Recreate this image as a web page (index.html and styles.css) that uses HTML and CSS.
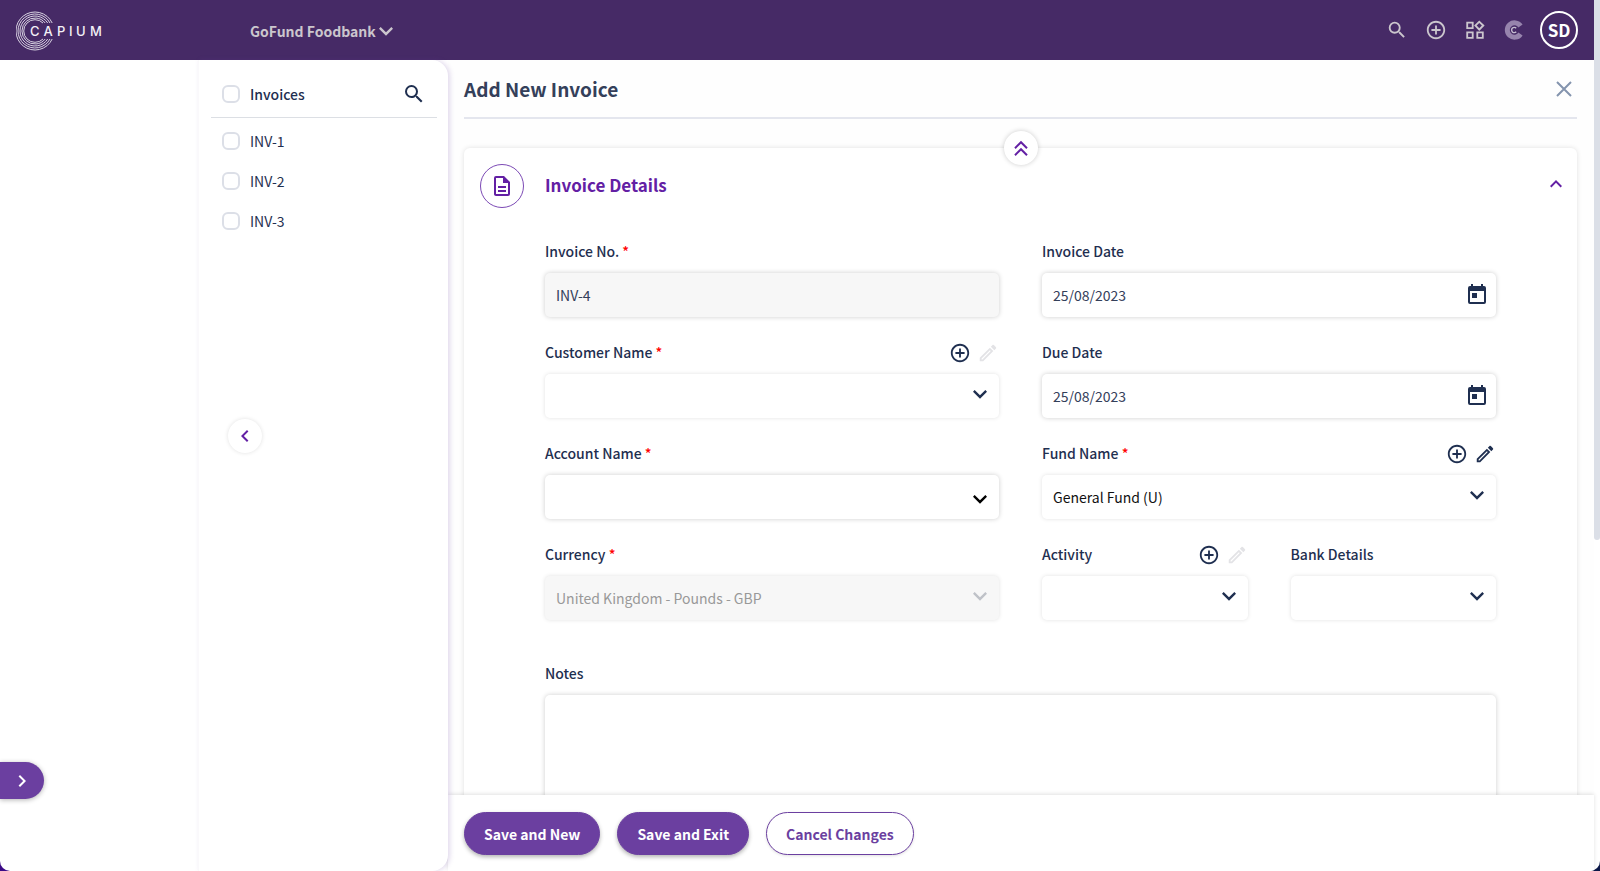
FILE: index.html
```html
<!DOCTYPE html>
<html lang="en">
<head>
<meta charset="utf-8">
<title>Add New Invoice</title>
<link rel="stylesheet" href="styles.css">
</head>
<body>
<svg class="sprite" aria-hidden="true">
  <symbol id="search" viewBox="0 0 24 24"><path fill="currentColor" d="M15.5 14h-.79l-.28-.27A6.47 6.47 0 0 0 16 9.5 6.5 6.5 0 1 0 9.5 16c1.61 0 3.09-.59 4.23-1.57l.27.28v.79l5 4.99L20.49 19zm-6 0C7.01 14 5 11.99 5 9.5S7.01 5 9.5 5 14 7.01 14 9.5 11.99 14 9.5 14z"/></symbol>
  <symbol id="plus" viewBox="0 0 24 24"><path fill="currentColor" d="M13 7h-2v4H7v2h4v4h2v-4h4v-2h-4zm-1-5C6.48 2 2 6.48 2 12s4.48 10 10 10 10-4.48 10-10S17.52 2 12 2zm0 18c-4.41 0-8-3.59-8-8s3.59-8 8-8 8 3.590 8 8-3.590 8-8 8z"/></symbol>
  <symbol id="pencil" viewBox="0 0 24 24"><path fill="currentColor" d="M14.060 9.020l.92.920L5.920 19H5v-.920zM17.660 3c-.25 0-.510.100-.700.290l-1.830 1.830 3.750 3.750 1.830-1.830c.390-.390.390-1.020 0-1.410l-2.340-2.340A1 1 0 0 0 17.660 3zm-3.600 3.190L3 17.250V21h3.750L17.810 9.940z"/></symbol>
  <symbol id="down" viewBox="0 0 24 24"><path fill="currentColor" d="M7.410 8.590 12 13.170l4.590-4.580L18 10l-6 6-6-6z"/></symbol>
  <symbol id="up" viewBox="0 0 24 24"><path fill="currentColor" d="M12 8l-6 6 1.410 1.410L12 10.830l4.590 4.580L18 14z"/></symbol>
  <symbol id="left" viewBox="0 0 24 24"><path fill="currentColor" d="M15.410 7.410 14 6l-6 6 6 6 1.410-1.410L10.830 12z"/></symbol>
  <symbol id="right" viewBox="0 0 24 24"><path fill="currentColor" d="M10 6 8.590 7.410 13.170 12l-4.580 4.590L10 18l6-6z"/></symbol>
  <symbol id="calendar" viewBox="0 0 24 24"><path fill="currentColor" d="M19 3h-1V1h-2v2H8V1H6v2H5a2 2 0 0 0-2 2v14a2 2 0 0 0 2 2h14a2 2 0 0 0 2-2V5a2 2 0 0 0-2-2zm0 16H5V8h14zM7 10h5v5H7z"/></symbol>
</svg>
<div class="app">
  <div class="page">
    <header class="topbar">
      <a class="logo" href="#" aria-label="Capium">
        <svg class="logo-art" viewBox="0 0 90 40" fill="none" stroke="#d9d3e2">
          <g stroke-width="1">
            <path d="M36.200 12A19 19 0 1 0 36.200 28"/>
            <path d="M34 12A17 17 0 1 0 34 28"/>
            <path d="M31.700 12A15 15 0 1 0 31.700 28"/>
            <path d="M29.200 12A13 13 0 1 0 29.200 28"/>
            <path d="M27 12A11.300 11.300 0 1 0 27 28"/>
          </g>
          <text class="logo-text" x="14 27.500 41 53 60 74" y="25">CAPIUM</text>
        </svg>
      </a>
      <button class="company" type="button">GoFund Foodbank <svg class="icon"><use href="#down"/></svg></button>
      <nav class="tools" aria-label="Tools">
        <button type="button" aria-label="Search"><svg class="icon"><use href="#search"/></svg></button>
        <button type="button" aria-label="Add"><svg class="icon"><use href="#plus"/></svg></button>
        <button type="button" aria-label="Apps"><svg class="icon" viewBox="0 0 24 24"><path fill="currentColor" fill-rule="evenodd" d="M16.660 1.500l5.840 5.660-5.840 5.840L11 7.160zm0 2.830-2.830 2.830 2.830 2.840 2.840-2.840zM2.500 3h8v8h-8zm2 2v4h4V5zM2.500 13.500h8v8h-8zm2 2v4h4v-4zM13.500 13.500h8v8h-8zm2 2v4h4v-4z"/></svg></button>
        <button type="button" aria-label="Capium apps"><svg class="icon" viewBox="0 0 22 22"><path fill="none" stroke="#9784ad" stroke-width="5" d="M17.500 7A7.200 7.200 0 1 0 17.500 15"/><path fill="none" stroke="#c5bdd0" stroke-width="1.400" d="M13.200 9.300A2.600 2.600 0 1 0 13.200 12.700"/></svg></button>
        <button class="avatar" type="button">SD</button>
      </nav>
    </header>
    <div class="body">
      <div class="rail"><button class="rail-open" type="button" aria-label="Open menu"><svg class="icon"><use href="#right"/></svg></button></div>
      <aside class="sidebar">
        <div class="list-head">
          <label class="row"><input type="checkbox"> <b>Invoices</b></label>
          <button type="button" aria-label="Search invoices"><svg class="icon"><use href="#search"/></svg></button>
        </div>
        <ul class="list">
          <li><label class="row"><input type="checkbox"> INV-1</label></li>
          <li><label class="row"><input type="checkbox"> INV-2</label></li>
          <li><label class="row"><input type="checkbox"> INV-3</label></li>
        </ul>
        <button class="collapse" type="button" aria-label="Collapse list"><svg class="icon"><use href="#left"/></svg></button>
      </aside>
      <main class="main">
        <div class="content">
          <div class="title">
            <h1>Add New Invoice</h1>
            <button type="button" aria-label="Close"><svg class="close" viewBox="0 0 16 16"><path stroke="#8494ae" stroke-width="2" d="M1 1l14 14M15 1 1 15"/></svg></button>
          </div>
          <section class="card">
            <button class="fold" type="button" aria-label="Fold all"><svg class="icon" viewBox="0 0 24 24"><path fill="none" stroke="currentColor" stroke-width="2" d="M6 12.200 12 6.200l6 6M6 19.200 12 13.200l6 6"/></svg></button>
            <div class="card-head">
              <span class="badge"><svg class="icon" viewBox="0 0 24 24"><path fill="currentColor" d="M8 16h8v2H8zm0-4h8v2H8zm6-10H6a2 2 0 0 0-2 2v16c0 1.100.890 2 1.990 2H18a2 2 0 0 0 2-2V8zm4 18H6V4h7v5h5z"/></svg></span>
              <h2>Invoice Details</h2>
              <button type="button" aria-label="Collapse section"><svg class="icon"><use href="#up"/></svg></button>
            </div>
            <form class="form">
              <div class="field wide">
                <div class="label"><label for="no">Invoice No. <i>*</i></label></div>
                <input class="box" id="no" type="text" value="INV-4" readonly>
              </div>
              <div class="field wide">
                <div class="label"><label for="date">Invoice Date</label></div>
                <div class="control"><input class="box" id="date" type="text" value="25/08/2023"><svg class="icon"><use href="#calendar"/></svg></div>
              </div>
              <div class="field wide">
                <div class="label"><label for="customer">Customer Name <i>*</i></label><button type="button" aria-label="Add customer"><svg class="icon"><use href="#plus"/></svg></button><button type="button" aria-label="Edit customer" disabled><svg class="icon"><use href="#pencil"/></svg></button></div>
                <div class="control"><select class="box light" id="customer"><option></option></select><svg class="icon chevron"><use href="#down"/></svg></div>
              </div>
              <div class="field wide">
                <div class="label"><label for="due">Due Date</label></div>
                <div class="control"><input class="box" id="due" type="text" value="25/08/2023"><svg class="icon"><use href="#calendar"/></svg></div>
              </div>
              <div class="field wide">
                <div class="label"><label for="account">Account Name <i>*</i></label></div>
                <div class="control account"><select class="box" id="account"><option></option></select><svg class="icon chevron"><use href="#down"/></svg></div>
              </div>
              <div class="field wide">
                <div class="label"><label for="fund">Fund Name <i>*</i></label><button type="button" aria-label="Add fund"><svg class="icon"><use href="#plus"/></svg></button><button type="button" aria-label="Edit fund"><svg class="icon"><use href="#pencil"/></svg></button></div>
                <div class="control"><select class="box light" id="fund"><option>General Fund (U)</option></select><svg class="icon chevron"><use href="#down"/></svg></div>
              </div>
              <div class="field wide">
                <div class="label"><label for="currency">Currency <i>*</i></label></div>
                <div class="control"><select class="box light" id="currency" disabled><option>United Kingdom - Pounds - GBP</option></select><svg class="icon chevron"><use href="#down"/></svg></div>
              </div>
              <div class="field">
                <div class="label"><label for="activity">Activity</label><button type="button" aria-label="Add activity"><svg class="icon"><use href="#plus"/></svg></button><button type="button" aria-label="Edit activity" disabled><svg class="icon"><use href="#pencil"/></svg></button></div>
                <div class="control"><select class="box light" id="activity"><option></option></select><svg class="icon chevron"><use href="#down"/></svg></div>
              </div>
              <div class="field">
                <div class="label"><label for="bank">Bank Details</label></div>
                <div class="control"><select class="box light" id="bank"><option></option></select><svg class="icon chevron"><use href="#down"/></svg></div>
              </div>
              <div class="field full">
                <div class="label"><label for="notes">Notes</label></div>
                <textarea class="box" id="notes"></textarea>
              </div>
            </form>
          </section>
        </div>
        <footer class="actions">
          <button class="pill" type="button">Save and New</button>
          <button class="pill" type="button">Save and Exit</button>
          <button class="pill outline" type="button">Cancel Changes</button>
        </footer>
      </main>
    </div>
  </div>
  <div class="track"><div class="thumb"></div></div>
</div>
</body>
</html>
```
FILE: styles.css
```css
* { box-sizing: border-box; }
body {
  margin: 0;
  font: 14px/20px "Noto Sans CJK SC", "Noto Sans", sans-serif;
  color: #1f2f50;
  background: linear-gradient(90deg, #3b0a86 50%, #0a1748 50%);
}
button {
  font: inherit;
  color: inherit;
  background: none;
  border: 0;
  padding: 0;
  display: inline-flex;
  align-items: center;
  justify-content: center;
}
h1, h2 { margin: 0; font-weight: 700; }
.sprite { display: none; }
.icon { width: 24px; height: 24px; display: block; flex: none; }

.app {
  display: flex;
  height: 100vh;
  overflow: hidden;
  background: #fff;
  border-radius: 0 0 10px 10px;
}
.page { flex: 1; min-width: 0; display: flex; flex-direction: column; }
.track { width: 6px; }
.thumb { height: 62%; background: #dbdfe7; border-radius: 0 0 3px 3px; }

.topbar {
  height: 60px;
  flex: none;
  display: flex;
  align-items: center;
  padding: 0 16px;
  background: #462a66;
  color: #cbc6cd;
}
.logo { width: 234px; padding-top: 2px; }
.logo-art { width: 90px; height: 40px; display: block; }
.logo-text { font: 500 13px "Inter", sans-serif; fill: #f3f0f6; stroke: none; }
.company { font-weight: 700; padding-top: 2px; }
.company .icon { width: 28px; height: 28px; margin-left: -4px; }
.tools { margin-left: auto; display: flex; align-items: center; gap: 17px; }
.tools .icon { width: 22px; height: 22px; }
.avatar {
  width: 38px;
  height: 38px;
  margin-left: -2px;
  border: 2px solid #fff;
  border-radius: 50%;
  color: #fff;
  font-size: 17px;
  font-weight: 700;
}

.body { flex: 1; min-height: 0; display: flex; }
.rail { width: 198px; flex: none; display: flex; align-items: flex-end; padding-bottom: 72px; }
.rail-open {
  width: 44px;
  height: 37px;
  border-radius: 0 19px 19px 0;
  background: #6b3fa0;
  color: #fff;
  box-shadow: 0 1px 5px rgba(0, 0, 0, .3);
}
.sidebar {
  width: 250px;
  flex: none;
  position: relative;
  padding: 11px 11px 0 12px;
  border-left: 1px solid #faf9fb;
  border-radius: 0 16px 16px 0;
  background: #fff;
  box-shadow: 2px 0 5px rgba(107, 63, 160, .2);
  z-index: 1;
}
.list-head { display: flex; justify-content: space-between; align-items: center; height: 47px; padding: 0 11px 0 0; border-bottom: 1px solid #dcdfe4; }
.row { display: flex; align-items: center; gap: 10px; padding-left: 11px; }
.row b { font-weight: 500; }
.row input {
  appearance: none;
  width: 18px;
  height: 18px;
  margin: 0;
  border: 2px solid #dcdfe7;
  border-radius: 6px;
  background: #fff;
}
.list { list-style: none; margin: 0; padding: 3px 0 0; }
.list .row { height: 40px; }
.collapse, .fold {
  position: absolute;
  width: 34px;
  height: 34px;
  border-radius: 50%;
  background: #fff;
  color: #6320a4;
  box-shadow: 0 0 5px rgba(0, 0, 0, .2);
}
.collapse { left: 29px; top: 359px; box-shadow: 0 0 4px rgba(0, 0, 0, .12); }

.main { flex: 1; min-width: 0; display: flex; flex-direction: column; background: #fefefe; }
.content { flex: 1; min-height: 0; overflow: hidden; padding: 0 17px 0 16px; }
.title {
  display: flex;
  align-items: center;
  justify-content: space-between;
  height: 59px;
  padding-right: 5px;
  border-bottom: 2px solid #e4e6ee;
}
.title h1 { font-size: 19px; line-height: 28px; color: #34405a; }
.close { width: 16px; height: 16px; }
.card {
  position: relative;
  margin-top: 29px;
  border-radius: 6px;
  background: #fff;
  box-shadow: 0 0 5px rgba(0, 0, 0, .12);
}
.fold { left: calc(50% - 17px); top: -17px; }
.card-head { display: flex; align-items: center; height: 76px; padding: 0 9px 0 16px; color: #6320a4; }
.card-head h2 { flex: 1; font-size: 17px; line-height: 24px; margin-left: 21px; padding-bottom: 2px; }
.card-head button { padding-bottom: 4px; }
.badge {
  width: 44px;
  height: 44px;
  display: flex;
  align-items: center;
  justify-content: center;
  border: 1px solid #7c4ab5;
  border-radius: 50%;
}
.form {
  display: grid;
  grid-template-columns: repeat(4, 1fr);
  gap: 21px 43px;
  padding: 13px 81px 32px;
}
.wide { grid-column: span 2; }
.full { grid-column: 1 / -1; margin-top: 18px; }
.field { min-width: 0; }
.label { display: flex; align-items: center; gap: 6px; height: 28px; margin-bottom: 8px; font-weight: 500; }
.label label { flex: 1; }
.label i { color: #f00; font-style: normal; }
.label button { padding-top: 2px; }
.label .icon { width: 22px; height: 22px; }
.label button:disabled { color: #e3e3e6; }
.control { display: grid; align-items: center; }
.control > * { grid-area: 1 / 1; }
.control .icon { justify-self: end; margin-right: 7px; pointer-events: none; }
.control .chevron { width: 28px; height: 28px; margin: 0 5px 4px 0; }
.control.account .chevron { margin: 4px 5px 0 0; color: #000; }
.box {
  display: block;
  width: 100%;
  height: 44px;
  margin: 0;
  padding: 0 11px;
  border: 0;
  border-radius: 5px;
  font: inherit;
  color: #34405a;
  background: #fff;
  appearance: none;
  resize: none;
  box-shadow: 0 0 5px rgba(0, 0, 0, .2);
}
.box.light { color: #111; box-shadow: 0 0 4px rgba(0, 0, 0, .12); }
.box[readonly], .box.light:disabled { background: #f7f7f7; }
.box.light:disabled { color: #999; opacity: 1; }
.box:disabled + .icon { color: #bfc2c8; }
textarea.box { height: 130px; }

.actions {
  flex: none;
  display: flex;
  gap: 17px;
  padding: 17px 16px 16px;
  background: #fff;
  box-shadow: 0 -1px 4px rgba(0, 0, 0, .12);
  position: relative;
}
.pill {
  height: 43px;
  padding: 0 19px;
  border: 1px solid #6b3fa0;
  border-radius: 22px;
  background: #6b3fa0;
  color: #fff;
  font-weight: 700;
  box-shadow: 0 2px 4px rgba(0, 0, 0, .3);
}
.outline { background: #fff; color: #6b3fa0; box-shadow: 0 1px 3px rgba(0, 0, 0, .12); }
```
